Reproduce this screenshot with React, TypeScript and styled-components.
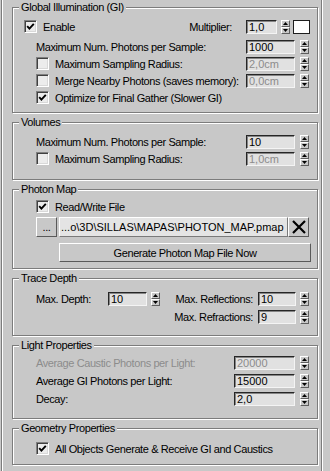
import React from 'react';
import styled, { createGlobalStyle } from 'styled-components';

const Global = createGlobalStyle`
  html, body { margin: 0; padding: 0; background: #c8c8c8; }
  body { font-family: 'Liberation Sans', Arial, sans-serif; font-size: 11px; letter-spacing: -0.4px; color: #000; }
  * { box-sizing: border-box; }
`;

const Screen = styled.div`
  width: 330px;
  height: 471px;
  overflow: hidden;
  background: #c8c8c8;
  padding-left: 1px;
`;

const Rollout = styled.div`
  width: 321px;
  height: 471px;
  border-left: 1px solid #7c7c7c;
  border-right: 1px solid #7c7c7c;
  box-shadow: inset 1px 0 0 #fff, 1px 0 0 #fff;
  padding: 0 3px 0 10px;
  display: flex;
  flex-direction: column;
  gap: 2px;
`;

const Group = styled.fieldset`
  margin: 0;
  padding: 0;
  min-width: 0;
  width: 306px;
  flex: none;
  border: 1px solid #7c7c7c;
  box-shadow: inset 1px 1px 0 #fff, 1px 1px 0 #fff;
`;

const Legend = styled.legend`
  margin-left: 6px;
  padding: 0 2px;
  height: 15px;
  line-height: 15px;
  background: #c8c8c8;
`;

const Body = styled.div<{ $pt: number; $pb: number }>`
  display: flex;
  flex-direction: column;
  padding: ${(p) => p.$pt}px 8px ${(p) => p.$pb}px 23px;
`;

const Row = styled.div<{ $h?: number; $mt?: number; $ml?: number }>`
  display: flex;
  align-items: center;
  height: ${(p) => p.$h ?? 17}px;
  margin-top: ${(p) => p.$mt ?? 0}px;
  margin-left: ${(p) => p.$ml ?? 0}px;
`;

const Label = styled.span<{ $disabled?: boolean; $w?: number; $right?: boolean; $pr?: number }>`
  white-space: nowrap;
  color: ${(p) => (p.$disabled ? '#8c8c8c' : '#000')};
  ${(p) => (p.$w ? `width: ${p.$w}px; flex: none;` : 'flex: 1;')}
  text-align: ${(p) => (p.$right ? 'right' : 'left')};
  padding-right: ${(p) => p.$pr ?? 0}px;
`;

const Box = styled.span`
  width: 13px;
  height: 13px;
  flex: none;
  display: inline-flex;
  align-items: center;
  justify-content: center;
  background: #ececec;
  border: 1px solid;
  border-color: #808080 #fff #fff #808080;
  box-shadow: inset 1px 1px 0 #404040, inset -1px -1px 0 #d8d8d8;
  margin-right: 6px;
`;

const Input = styled.div<{ $w: number; $disabled?: boolean }>`
  width: ${(p) => p.$w}px;
  height: 14px;
  flex: none;
  background: #e1e1e1;
  border: 1px solid;
  border-color: #262626 #f4f4f4 #f4f4f4 #262626;
  box-shadow: inset 1px 1px 0 #858585;
  padding-left: 2px;
  line-height: 12px;
  letter-spacing: 0;
  color: ${(p) => (p.$disabled ? '#8c8c8c' : '#000')};
  overflow: hidden;
  white-space: nowrap;
`;

const Spin = styled.div<{ $ml?: number }>`
  width: 9px;
  height: 14px;
  flex: none;
  margin-left: ${(p) => p.$ml ?? 5}px;
  display: flex;
  flex-direction: column;
`;

const SpinHalf = styled.div`
  flex: 1;
  display: flex;
  align-items: center;
  justify-content: center;
  background: #c8c8c8;
  border: 1px solid;
  border-color: #fff #5e5e5e #5e5e5e #fff;
`;

const Swatch = styled.div`
  width: 17px;
  height: 14px;
  flex: none;
  margin-left: 3px;
  margin-right: -1px;
  background: #fff;
  border: 1px solid #1e1e1e;
`;

const Button = styled.button<{ $w: number; $h: number; $ml?: number }>`
  font: inherit;
  letter-spacing: -0.4px;
  color: #000;
  width: ${(p) => p.$w}px;
  height: ${(p) => p.$h}px;
  flex: none;
  margin: 0 0 0 ${(p) => p.$ml ?? 0}px;
  padding: 0;
  background: #c8c8c8;
  border: 1px solid;
  border-color: #fff #5a5a5a #5a5a5a #fff;
  display: flex;
  align-items: center;
  justify-content: center;
`;

const PathField = styled.div`
  width: 229px;
  height: 20px;
  flex: none;
  margin-left: 2px;
  background: #e4e4e4;
  border: 1px solid;
  border-color: #fff #7a7a7a #7a7a7a #fff;
  padding-left: 1px;
  line-height: 18px;
  letter-spacing: 0;
  white-space: nowrap;
  overflow: hidden;
`;

const Spacer = styled.div`
  flex: 1;
`;

const Up = () => (
  <svg width="5" height="3" viewBox="0 0 5 3"><path d="M2.5 0 L5 3 L0 3 Z" fill="#000" /></svg>
);
const Down = () => (
  <svg width="5" height="3" viewBox="0 0 5 3"><path d="M0 0 L5 0 L2.5 3 Z" fill="#000" /></svg>
);

const Check = () => (
  <svg width="9" height="9" viewBox="0 0 9 9">
    <path d="M1.2 4.2 L3.4 6.6 L7.8 1.8" fill="none" stroke="#000" strokeWidth="1.9" />
  </svg>
);

const CheckBox: React.FC<{ checked?: boolean }> = ({ checked }) => <Box>{checked && <Check />}</Box>;

const SpinButtons: React.FC<{ ml?: number }> = ({ ml }) => (
  <Spin $ml={ml}>
    <SpinHalf><Up /></SpinHalf>
    <SpinHalf><Down /></SpinHalf>
  </Spin>
);

const Spinner: React.FC<{ w: number; value: string; disabled?: boolean; ml?: number }> = ({ w, value, disabled, ml }) => (
  <>
    <Input $w={w} $disabled={disabled}>{value}</Input>
    <SpinButtons ml={ml} />
  </>
);

const CloseIcon = () => (
  <svg width="14" height="14" viewBox="0 0 14 14">
    <path d="M1 1 L13 13 M13 1 L1 13" stroke="#000" strokeWidth="2.2" />
  </svg>
);

export default function App() {
  return (
    <>
      <Global />
      <Screen>
        <Rollout>
          <Group>
            <Legend>Global Illumination (GI)</Legend>
            <Body $pt={3} $pb={6}>
              <Row $ml={-12}>
                <CheckBox checked />
                <Label>Enable</Label>
                <Label $w={80} $right $pr={14}>Multiplier:</Label>
                <Input $w={31}>1,0</Input>
                <SpinButtons ml={4} />
                <Swatch />
              </Row>
              <Row $mt={3}>
                <Label>Maximum Num. Photons per Sample:</Label>
                <Spinner w={49} value="1000" />
              </Row>
              <Row>
                <CheckBox />
                <Label>Maximum Sampling Radius:</Label>
                <Spinner w={49} value="2,0cm" disabled />
              </Row>
              <Row>
                <CheckBox />
                <Label>Merge Nearby Photons (saves memory):</Label>
                <Spinner w={49} value="0,0cm" disabled />
              </Row>
              <Row>
                <CheckBox checked />
                <Label>Optimize for Final Gather (Slower GI)</Label>
              </Row>
            </Body>
          </Group>

          <Group>
            <Legend>Volumes</Legend>
            <Body $pt={3} $pb={12}>
              <Row>
                <Label>Maximum Num. Photons per Sample:</Label>
                <Spinner w={49} value="10" />
              </Row>
              <Row>
                <CheckBox />
                <Label>Maximum Sampling Radius:</Label>
                <Spinner w={49} value="1,0cm" disabled />
              </Row>
            </Body>
          </Group>

          <Group>
            <Legend>Photon Map</Legend>
            <Body $pt={1} $pb={6}>
              <Row>
                <CheckBox checked />
                <Label>Read/Write File</Label>
              </Row>
              <Row $h={20} $mt={2}>
                <Button $w={21} $h={20}>...</Button>
                <PathField>...o\3D\SILLAS\MAPAS\PHOTON_MAP.pmap</PathField>
                <Button $w={21} $h={20}><CloseIcon /></Button>
              </Row>
              <Row $h={19} $mt={6}>
                <Button $w={252} $h={19} $ml={23}>Generate Photon Map File Now</Button>
              </Row>
            </Body>
          </Group>

          <Group>
            <Legend>Trace Depth</Legend>
            <Body $pt={4} $pb={10}>
              <Row>
                <Label $w={72}>Max. Depth:</Label>
                <Spinner w={39} value="10" ml={4} />
                <Label $right $pr={5}>Max. Reflections:</Label>
                <Spinner w={38} value="10" ml={4} />
              </Row>
              <Row $mt={1}>
                <Spacer />
                <Label $right $pr={5}>Max. Refractions:</Label>
                <Spinner w={38} value="9" ml={4} />
              </Row>
            </Body>
          </Group>

          <Group>
            <Legend>Light Properties</Legend>
            <Body $pt={1} $pb={10}>
              <Row $h={18}>
                <Label $disabled>Average Caustic Photons per Light:</Label>
                <Spinner w={61} value="20000" disabled />
              </Row>
              <Row $h={18}>
                <Label>Average GI Photons per Light:</Label>
                <Spinner w={61} value="15000" />
              </Row>
              <Row $h={18}>
                <Label>Decay:</Label>
                <Spinner w={61} value="2,0" />
              </Row>
            </Body>
          </Group>

          <Group>
            <Legend>Geometry Properties</Legend>
            <Body $pt={4} $pb={7}>
              <Row>
                <CheckBox checked />
                <Label>All Objects Generate &amp; Receive GI and Caustics</Label>
              </Row>
            </Body>
          </Group>
        </Rollout>
      </Screen>
    </>
  );
}
